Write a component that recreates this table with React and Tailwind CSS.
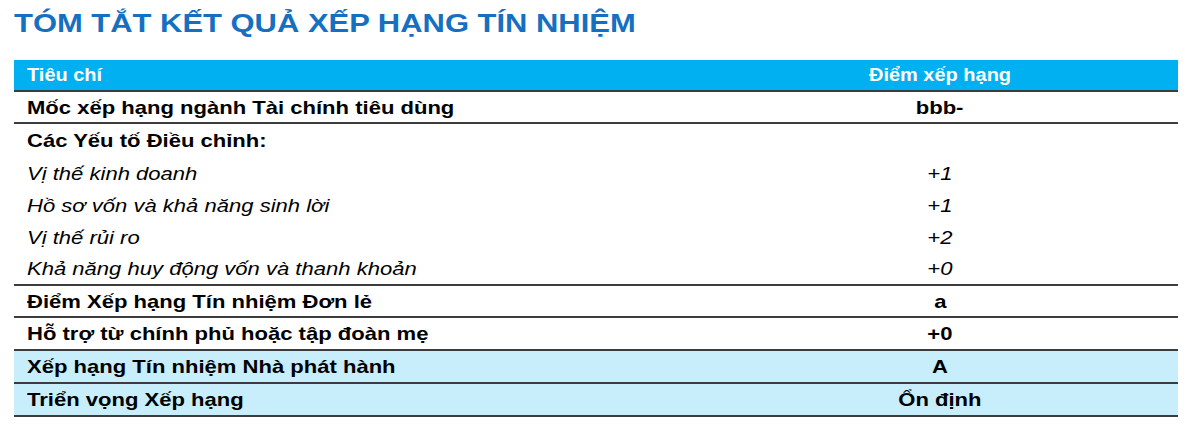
const rows = [
  { label: "Mốc xếp hạng ngành Tài chính tiêu dùng", value: "bbb-", kind: "bold", border: true, h: "h-[32px]" },
  { label: "Các Yếu tố Điều chỉnh:", value: "", kind: "bold", border: false, h: "h-[33px]" },
  { label: "Vị thế kinh doanh", value: "+1", kind: "italic", border: false, h: "h-[32px]" },
  { label: "Hồ sơ vốn và khả năng sinh lời", value: "+1", kind: "italic", border: false, h: "h-[32px]" },
  { label: "Vị thế rủi ro", value: "+2", kind: "italic", border: false, h: "h-[32px]" },
  { label: "Khả năng huy động vốn và thanh khoản", value: "+0", kind: "italic", border: true, h: "h-[33px]" },
  { label: "Điểm Xếp hạng Tín nhiệm Đơn lẻ", value: "a", kind: "bold", border: true, h: "h-[32px]" },
  { label: "Hỗ trợ từ chính phủ hoặc tập đoàn mẹ", value: "+0", kind: "bold", border: true, h: "h-[33px]" },
  { label: "Xếp hạng Tín nhiệm Nhà phát hành", value: "A", kind: "bold", border: true, h: "h-[33px]", tint: true },
  { label: "Triển vọng Xếp hạng", value: "Ổn định", kind: "bold", border: true, h: "h-[33px]", tint: true },
];

// the source text is a bit wider than Arial, stretch it sideways
function Wide({ children, center }) {
  return (
    <span
      className={`inline-block whitespace-nowrap scale-x-[1.16] ${center ? "origin-center" : "origin-left"}`}
    >
      {children}
    </span>
  );
}

function Row({ row }) {
  const text = row.kind === "italic" ? "italic font-normal" : "font-bold";
  return (
    <div
      className={`flex ${row.h} ${row.border ? "border-b-2 border-[#3c3c3c]" : ""} ${
        row.tint ? "bg-[#c8eefc]" : "bg-white"
      }`}
    >
      <div className={`w-[688px] flex items-center pl-[13px] ${text}`}>
        <Wide>{row.label}</Wide>
      </div>
      <div className={`flex-1 flex items-center justify-center ${text}`}>
        <Wide center>{row.value}</Wide>
      </div>
    </div>
  );
}

export default function App() {
  return (
    <div className="w-[1200px] h-[429px] bg-white px-[14px] text-black font-['Liberation_Sans',Arial,sans-serif]">
      <div className="h-[60px] pt-[8px]">
        <h1 className="text-[26px] leading-[30px] font-bold text-[#1570c2]">
          <span className="inline-block whitespace-nowrap origin-left scale-x-[1.19]">
            TÓM TẮT KẾT QUẢ XẾP HẠNG TÍN NHIỆM
          </span>
        </h1>
      </div>
      <div className="w-[1164px] text-[19px] leading-none">
        <div className="flex h-[32px] bg-[#00b0f0] border-b-2 border-[#3c3c3c] text-white font-bold text-[18px]">
          <div className="w-[688px] flex items-center pl-[13px]">
            <span className="inline-block whitespace-nowrap origin-left scale-x-[1.11]">Tiêu chí</span>
          </div>
          <div className="flex-1 flex items-center justify-center">
            <span className="inline-block whitespace-nowrap origin-center scale-x-[1.11]">Điểm xếp hạng</span>
          </div>
        </div>
        {rows.map((r) => (
          <Row key={r.label} row={r} />
        ))}
      </div>
    </div>
  );
}
